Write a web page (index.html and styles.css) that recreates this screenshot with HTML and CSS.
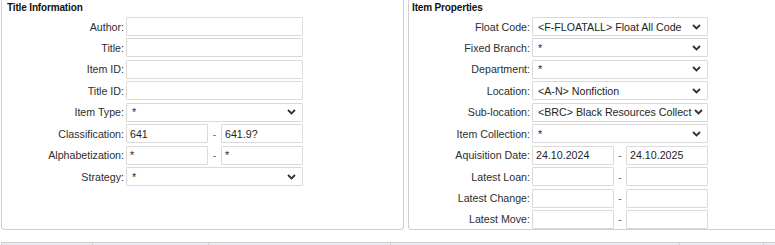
FILE: index.html
```html
<!DOCTYPE html>
<html>
<head>
<meta charset="utf-8">
<link rel="stylesheet" href="styles.css">
</head>
<body>
<div class="panels">
  <section class="panel left">
    <h2 class="heading">Title Information</h2>
    <div class="form">
      <div class="row"><label class="lbl">Author:</label><div class="field full"></div></div>
      <div class="row"><label class="lbl">Title:</label><div class="field full"></div></div>
      <div class="row"><label class="lbl">Item ID:</label><div class="field full"></div></div>
      <div class="row"><label class="lbl">Title ID:</label><div class="field full"></div></div>
      <div class="row"><label class="lbl">Item Type:</label><div class="field full select"><span class="val">*</span><svg class="chev" width="9" height="6" viewBox="0 0 9 6"><path d="M1 1 L4.5 4.5 L8 1" fill="none" stroke="#333" stroke-width="1.8"/></svg></div></div>
      <div class="row"><label class="lbl">Classification:</label><div class="field half"><span class="val">641</span></div><span class="dash">-</span><div class="field half"><span class="val">641.9?</span></div></div>
      <div class="row"><label class="lbl">Alphabetization:</label><div class="field half"><span class="val">*</span></div><span class="dash">-</span><div class="field half"><span class="val">*</span></div></div>
      <div class="row"><label class="lbl">Strategy:</label><div class="field full select"><span class="val">*</span><svg class="chev" width="9" height="6" viewBox="0 0 9 6"><path d="M1 1 L4.5 4.5 L8 1" fill="none" stroke="#333" stroke-width="1.8"/></svg></div></div>
    </div>
  </section>
  <section class="panel right">
    <h2 class="heading">Item Properties</h2>
    <div class="form">
      <div class="row"><label class="lbl">Float Code:</label><div class="field full select"><span class="val">&lt;F-FLOATALL&gt; Float All Code</span><svg class="chev" width="9" height="6" viewBox="0 0 9 6"><path d="M1 1 L4.5 4.5 L8 1" fill="none" stroke="#333" stroke-width="1.8"/></svg></div></div>
      <div class="row"><label class="lbl">Fixed Branch:</label><div class="field full select"><span class="val">*</span><svg class="chev" width="9" height="6" viewBox="0 0 9 6"><path d="M1 1 L4.5 4.5 L8 1" fill="none" stroke="#333" stroke-width="1.8"/></svg></div></div>
      <div class="row"><label class="lbl">Department:</label><div class="field full select"><span class="val">*</span><svg class="chev" width="9" height="6" viewBox="0 0 9 6"><path d="M1 1 L4.5 4.5 L8 1" fill="none" stroke="#333" stroke-width="1.8"/></svg></div></div>
      <div class="row"><label class="lbl">Location:</label><div class="field full select"><span class="val">&lt;A-N&gt; Nonfiction</span><svg class="chev" width="9" height="6" viewBox="0 0 9 6"><path d="M1 1 L4.5 4.5 L8 1" fill="none" stroke="#333" stroke-width="1.8"/></svg></div></div>
      <div class="row"><label class="lbl">Sub-location:</label><div class="field full select tight"><span class="val">&lt;BRC&gt; Black Resources Collect</span><svg class="chev" width="9" height="6" viewBox="0 0 9 6"><path d="M1 1 L4.5 4.5 L8 1" fill="none" stroke="#333" stroke-width="1.8"/></svg></div></div>
      <div class="row"><label class="lbl">Item Collection:</label><div class="field full select"><span class="val">*</span><svg class="chev" width="9" height="6" viewBox="0 0 9 6"><path d="M1 1 L4.5 4.5 L8 1" fill="none" stroke="#333" stroke-width="1.8"/></svg></div></div>
      <div class="row"><label class="lbl">Aquisition Date:</label><div class="field half"><span class="val">24.10.2024</span></div><span class="dash">-</span><div class="field half"><span class="val">24.10.2025</span></div></div>
      <div class="row"><label class="lbl">Latest Loan:</label><div class="field half"></div><span class="dash">-</span><div class="field half"></div></div>
      <div class="row"><label class="lbl">Latest Change:</label><div class="field half"></div><span class="dash">-</span><div class="field half"></div></div>
      <div class="row"><label class="lbl">Latest Move:</label><div class="field half"></div><span class="dash">-</span><div class="field half"></div></div>
    </div>
  </section>
</div>
<div class="strip">
  <div class="cell c1"></div>
  <div class="cell c2"></div>
  <div class="cell c3"></div>
  <div class="cell c4"></div>
  <div class="cell c5"></div>
  <div class="cell c6"></div>
</div>
</body>
</html>
```
FILE: styles.css
```css
html, body {
  margin: 0;
  padding: 0;
  background: #ffffff;
}
body {
  font-family: "Liberation Sans", Arial, sans-serif;
  font-size: 8pt;
  color: #333333;
  width: 775px;
  height: 245px;
  overflow: hidden;
}
.panels {
  display: flex;
  gap: 4px;
  padding-left: 1px;
  height: 230px;
  overflow: hidden;
}
.panel {
  box-sizing: border-box;
  height: 230px;
  border: 1px solid #cfcfcf;
  border-top: none;
  border-radius: 0 0 4px 4px;
  flex: 0 0 auto;
}
.panel.left {
  width: 403px;
}
.panel.right {
  width: 400px;
}
.heading {
  margin: 0 0 3px 0;
  padding: 2px 0 0 5px;
  font-size: 10px;
  line-height: 12px;
  font-weight: bold;
  color: #111111;
  letter-spacing: -0.15px;
}
.right .heading {
  padding-left: 3px;
}
.form {
  display: flex;
  flex-direction: column;
  gap: 2.45px;
}
.row {
  display: flex;
  align-items: center;
  height: 19px;
}
.lbl {
  box-sizing: border-box;
  flex: 0 0 124px;
  padding-right: 2px;
  text-align: right;
  white-space: nowrap;
  color: #2e2e2e;
}
.right .lbl {
  flex-basis: 123px;
}
.field {
  box-sizing: border-box;
  height: 19px;
  border: 1px solid #dadada;
  border-radius: 1px;
  background: #ffffff;
  display: flex;
  align-items: center;
  padding: 0 3px;
  color: #1e1e1e;
  overflow: hidden;
  white-space: nowrap;
}
.field.full {
  width: 177px;
}
.right .field.full {
  width: 176px;
}
.field.half {
  width: 82px;
}
.select {
  padding-left: 5px;
  padding-right: 6px;
}
.select .val {
  flex: 1 1 auto;
  min-width: 0;
  overflow: hidden;
  white-space: nowrap;
}
.chev {
  flex: 0 0 auto;
  margin-left: 3px;
}
.select.tight {
  padding-right: 4px;
}
.select.tight .chev {
  margin-left: 0;
}
.dash {
  flex: 0 0 13px;
  text-align: center;
  color: #666666;
}
.right .dash {
  flex-basis: 12px;
}
.strip {
  margin-top: 12px;
  margin-left: 1px;
  height: 10px;
  display: flex;
  border-top: 1px solid #cfcfcf;
  border-left: 1px solid #cfcfcf;
  background: #e9e9f7;
}
.cell {
  box-sizing: border-box;
  border-right: 1px solid #cfcfcf;
  flex: 0 0 auto;
}
.c1 { width: 91px; }
.c2 { width: 116px; }
.c3 { width: 182px; }
.c4 { width: 289px; }
.c5 { width: 84px; }
.c6 { flex: 1 1 auto; border-right: none; }
```
